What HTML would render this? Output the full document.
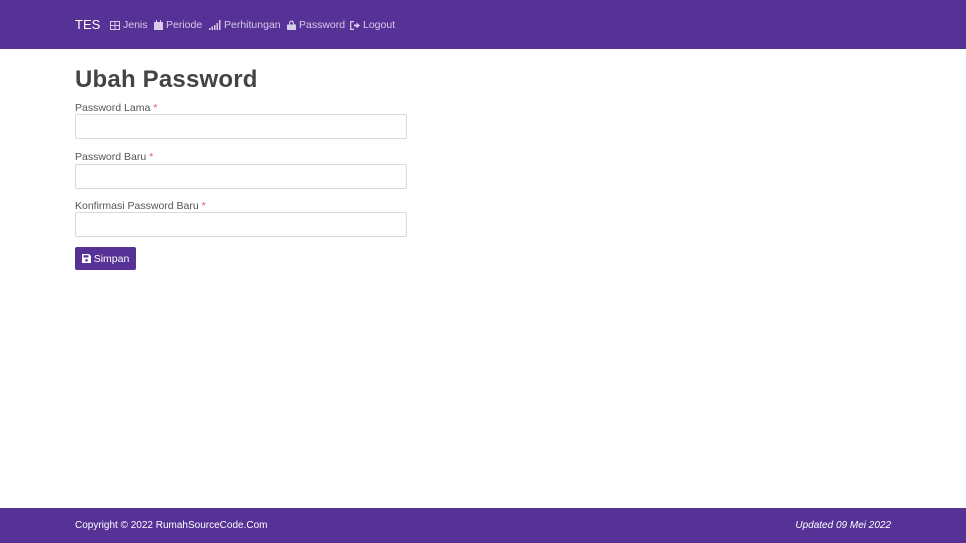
<!DOCTYPE html>
<html><head><style>
*{box-sizing:border-box;margin:0;padding:0}
body{width:966px;height:543px;position:relative;background:#fff;font-family:"Liberation Sans",sans-serif;font-size:11px;color:#444;overflow:hidden}
.nav{position:absolute;top:0;left:0;width:966px;height:49px;background:#563296;color:#d6cbe8}
.brand{position:absolute;left:75px;top:17px;font-size:13px;color:#fff}
.nav .it{position:absolute;top:19px;font-size:10.5px;display:flex;align-items:center;gap:3px}
.nav svg{fill:#d6cbe8}
h1{position:absolute;left:75px;top:66px;font-size:24px;font-weight:bold;color:#444;letter-spacing:0.2px}
label{position:absolute;left:75px;font-size:10.5px;color:#555}
label span{color:#e55}
.in{position:absolute;left:75px;width:332px;height:25px;border:1px solid #d8d8de;border-radius:2px}
.btn{position:absolute;left:75px;top:247px;width:61px;height:23px;background:#563296;color:#fff;font-size:10.5px;display:flex;align-items:center;justify-content:center;gap:3px;border-radius:2px}
.foot{position:absolute;left:0;top:508px;width:966px;height:35px;background:#563296;color:#fff;font-size:10px}
</style></head><body>
<div class="nav">
<div class="brand">TES</div>
<div class="it" style="left:110px"><svg width="10" height="9" viewBox="0 0 10 9"><path d="M0 0h10v9H0zM1 1v3h3.5V1zm4.5 0v3H9V1zM1 5v3h3.5V5zm4.5 0v3H9V5z" fill-rule="evenodd"/></svg>Jenis</div>
<div class="it" style="left:154px"><svg width="9" height="10" viewBox="0 0 9 10"><path d="M0 2h9v8H0zM2 0h1v2H2zM6 0h1v2H6z"/></svg>Periode</div>
<div class="it" style="left:209px"><svg width="12" height="10" viewBox="0 0 12 10"><path d="M0 8h1.5v2H0zM2.5 6.5H4V10H2.5zM5 5h1.5v5H5zM7.5 3H9v7H7.5zM10 0h1.5v10H10z"/></svg>Perhitungan</div>
<div class="it" style="left:287px"><svg width="9" height="10" viewBox="0 0 9 10"><path d="M0 4.5h9V10H0zM2 4.5V3a2.5 2.5 0 0 1 5 0v1.5H5.8V3a1.3 1.3 0 0 0-2.6 0v1.5z"/></svg>Password</div>
<div class="it" style="left:350px"><svg width="10" height="9" viewBox="0 0 10 9"><path d="M0 0h4v1.3H1.3v6.4H4V9H0zM4 3.5h2.5V1.5L10 4.5 6.5 7.5V5.5H4z"/></svg>Logout</div>
</div>
<h1>Ubah Password</h1>
<label style="top:102px">Password Lama <span>*</span></label>
<div class="in" style="top:114px"></div>
<label style="top:151px">Password Baru <span>*</span></label>
<div class="in" style="top:164px"></div>
<label style="top:200px">Konfirmasi Password Baru <span>*</span></label>
<div class="in" style="top:212px"></div>
<div class="btn"><svg width="9" height="9" viewBox="0 0 9 9"><path d="M0 0h7l2 2v7H0zM1.5 1.2v2.3h5V1.2zM4.5 5a1.3 1.3 0 1 0 0 2.6 1.3 1.3 0 0 0 0-2.6z" fill="#fff" fill-rule="evenodd"/></svg>Simpan</div>
<div class="foot"><span style="position:absolute;left:75px;top:12px">Copyright © 2022 RumahSourceCode.Com</span><span style="position:absolute;right:75px;top:12px;font-style:italic">Updated 09 Mei 2022</span></div>
</body></html>
